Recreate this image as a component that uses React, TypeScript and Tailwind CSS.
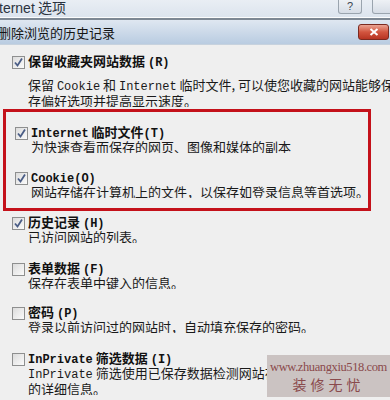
import React from 'react';

const cjk = { fontFamily: '"Noto Sans CJK SC", "Noto Sans", sans-serif' };

// latin runs in the old dialog font look like a monospaced serif
const M: React.FC<{ children: React.ReactNode }> = ({ children }) => (
  <span className="text-[12px]" style={{ fontFamily: '"Liberation Mono", "Noto Sans CJK SC", monospace' }}>
    {children}
  </span>
);

const Check: React.FC<{ checked?: boolean }> = ({ checked }) => (
  <div className="w-[13px] h-[13px] shrink-0 border border-[#8e8f8f] bg-gradient-to-br from-[#dcdcdc] to-[#fbfbfb] flex items-center justify-center">
    {checked && (
      <svg width="11" height="11" viewBox="0 0 11 11">
        <path d="M2 5.5 L4.5 8.5 L9 1.5" fill="none" stroke="#4a5d86" strokeWidth="1.8" />
      </svg>
    )}
  </div>
);

type ItemProps = {
  checked?: boolean;
  label: React.ReactNode;
  lines: React.ReactNode[];
  className?: string;
  descClass?: string;
};

const Item: React.FC<ItemProps> = ({ checked, label, lines, className = '', descClass = '' }) => (
  <div className={`pl-[12px] ${className}`}>
    <div className="flex items-center h-[14px] gap-[3px]">
      <Check checked={checked} />
      <div className="text-[13px] font-bold leading-[14px] text-[#111] whitespace-nowrap">{label}</div>
    </div>
    <div className={`pl-[16px] text-[13px] leading-[13px] text-[#1a1a1a] ${descClass}`}>
      {lines.map((l, i) => (
        <div key={i} className="whitespace-nowrap overflow-hidden">{l}</div>
      ))}
    </div>
  </div>
);

export default function App() {
  return (
    <div className="w-[390px] h-[400px] overflow-hidden bg-[#efefef] relative" style={cjk}>
      {/* window title */}
      <div className="h-[18px] flex items-start bg-gradient-to-b from-[#e9eef4] to-[#dce4ee] border-b border-[#fbfcfd]">
        <div className="text-[14px] leading-[15px] text-[#2b3440] ml-[-1px]">
          <span style={{ fontFamily: '"Liberation Sans", sans-serif' }}>ternet</span> 选项
        </div>
        <div className="ml-auto flex gap-[10px] mr-[-8px]">
          <div className="w-[24px] h-[14px] border border-[#9aa4ae] border-t-0 rounded-b-[3px] bg-gradient-to-b from-[#eef1f5] to-[#d6dde6] flex items-center justify-center text-[11px] leading-none text-[#3b4450]" style={{ fontFamily: '"Liberation Sans", sans-serif' }}>
            ?
          </div>
          <div className="w-[26px] h-[14px] border border-[#9aa4ae] border-t-0 rounded-b-[3px] bg-gradient-to-b from-[#eef1f5] to-[#d6dde6]" />
        </div>
      </div>
      <div className="h-[2px] bg-[#7d8894]" />

      {/* dialog header */}
      <div className="h-[25px] flex items-center bg-gradient-to-b from-[#dfe7f1] to-[#b9cce1] border-b border-[#c7d2de]">
        <div className="text-[13px] leading-none text-[#141414] ml-[-2px]">删除浏览的历史记录</div>
        <div className="ml-auto mr-[1px] w-[31px] h-[16px] rounded-[3px] border border-[#7b2a20] bg-gradient-to-b from-[#e9a393] via-[#d2553f] to-[#b73422] flex items-center justify-center">
          <svg width="10" height="8" viewBox="0 0 10 8">
            <path d="M1.5 1 L8.5 7 M8.5 1 L1.5 7" stroke="#fff" strokeWidth="2" />
          </svg>
        </div>
      </div>

      {/* items */}
      <div className="pt-[10px]">
        <Item
          checked
          label={<>保留收藏夹网站数据 <M>(R)</M></>}
          descClass="mt-[9px]"
          lines={[
            <>保留 <M>Cookie</M> 和 <M>Internet</M> 临时文件, 可以使您收藏的网站能够保</>,
            <>存偏好选项并提高显示速度。</>,
          ]}
        />

        <div className="mt-[2px] ml-[3px] w-[368px] border-[3px] border-[#c4111a] pt-[14px] pb-[10px]">
          <div className="ml-[-3px]">
            <Item
              checked
              label={<><M>Internet</M> 临时文件<M>(T)</M></>}
              lines={[<>为快速查看而保存的网页、图像和媒体的副本</>]}
            />
            <Item
              checked
              className="mt-[18px]"
              label={<><M>Cookie(O)</M></>}
              lines={[<>网站存储在计算机上的文件，以保存如登录信息等首选项。</>]}
            />
          </div>
        </div>

        <Item
          checked
          className="mt-[5px]"
          label={<>历史记录 <M>(H)</M></>}
          lines={[<>已访问网站的列表。</>]}
        />
        <Item
          className="mt-[19px]"
          label={<>表单数据 <M>(F)</M></>}
          lines={[<>保存在表单中键入的信息。</>]}
        />
        <Item
          className="mt-[17px]"
          label={<>密码 <M>(P)</M></>}
          lines={[<>登录以前访问过的网站时，自动填充保存的密码。</>]}
        />
        <Item
          className="mt-[19px]"
          label={<><M>InPrivate</M> 筛选数据 <M>(I)</M></>}
          lines={[
            <><M>InPrivate</M> 筛选使用已保存数据检测网站在何处自动共享您访问</>,
            <>的详细信息。</>,
          ]}
        />
      </div>

      {/* watermark */}
      <div className="absolute left-[267px] top-[355px] w-[123px] h-[42px] bg-[#cbc3c2] flex flex-col items-center justify-center overflow-hidden">
        <div className="text-[12.5px] leading-[16px] tracking-[-0.4px] text-[#8a4a4c] whitespace-nowrap" style={{ fontFamily: '"Liberation Serif", serif' }}>
          www.zhuangxiu518.com
        </div>
        <div className="text-[14px] leading-[18px] text-[#8a4a4c] tracking-[4px] whitespace-nowrap">装修无忧</div>
      </div>
    </div>
  );
}
